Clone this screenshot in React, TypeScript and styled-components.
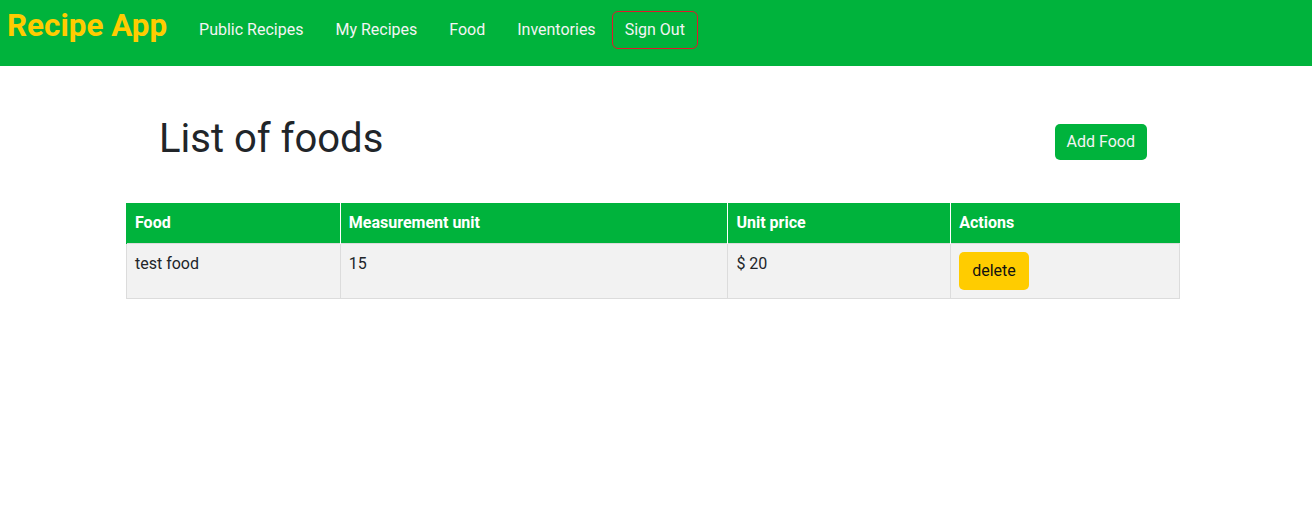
import React from "react";
import styled, { createGlobalStyle } from "styled-components";

const Global = createGlobalStyle`
  html, body { margin: 0; padding: 0; background: #fff; }
  body { font-family: Roboto, "Liberation Sans", sans-serif; color: #212529; font-size: 16px; line-height: 1.5; }
  * { box-sizing: border-box; }
`;

const NavBar = styled.nav`
  height: 66px;
  background: #00b33c;
  display: flex;
  align-items: center;
  padding: 0 7px;
`;

const Brand = styled.a`
  color: #ffcc00;
  font-size: 31.4px;
  font-weight: 700;
  line-height: 1;
  text-decoration: none;
  margin-right: 19px;
  margin-top: -14px;
`;

const NavList = styled.div`
  display: flex;
  align-items: center;
  gap: 6px;
  margin-top: -6px;
`;

const NavLink = styled.a<{ $outlined?: boolean }>`
  color: #f4f4f4;
  text-decoration: none;
  font-size: 16px;
  line-height: 24px;
  padding: 6px 12px;
  border: 1px solid ${(p) => (p.$outlined ? "#e0192b" : "transparent")};
  border-radius: 6px;
  margin-left: ${(p) => (p.$outlined ? "-3px" : "0")};
`;

const Main = styled.main`
  width: 1054px;
  margin: 0 0 0 126px;
`;

const Header = styled.div`
  display: flex;
  justify-content: space-between;
  align-items: flex-start;
  padding: 49px 33px 0 33px;
  height: 137px;
`;

const Title = styled.h1`
  margin: 0;
  font-size: 40px;
  font-weight: 400;
  line-height: 48px;
`;

const Button = styled.button<{ $variant: "green" | "yellow" }>`
  font-family: inherit;
  font-size: 16px;
  line-height: 24px;
  border: none;
  border-radius: 5px;
  padding: ${(p) => (p.$variant === "green" ? "6px 12px" : "7px 13px")};
  background: ${(p) => (p.$variant === "green" ? "#00b33c" : "#ffcc00")};
  color: ${(p) => (p.$variant === "green" ? "#f4f4f4" : "#111")};
  cursor: pointer;
`;

const AddButton = styled(Button)`
  margin-top: 9px;
`;

const Table = styled.table`
  width: 100%;
  border-collapse: collapse;
`;

const Th = styled.th<{ $w: number }>`
  width: ${(p) => p.$w}px;
  background: #00b33c;
  color: #fff;
  font-weight: 700;
  text-align: left;
  padding: 8px 8px;
  height: 40px;
  border-left: 1px solid #fff;
  &:first-child { border-left: 1px solid #00b33c; }
`;

const Td = styled.td`
  background: #f2f2f2;
  padding: 8px 8px 8px 8px;
  vertical-align: top;
  height: 55px;
  border: 1px solid #dcdcdc;
`;

export default function App() {
  return (
    <>
      <Global />
      <NavBar>
        <Brand href="#">Recipe App</Brand>
        <NavList>
          <NavLink href="#">Public Recipes</NavLink>
          <NavLink href="#">My Recipes</NavLink>
          <NavLink href="#">Food</NavLink>
          <NavLink href="#">Inventories</NavLink>
          <NavLink href="#" $outlined>Sign Out</NavLink>
        </NavList>
      </NavBar>
      <Main>
        <Header>
          <Title>List of foods</Title>
          <AddButton $variant="green">Add Food</AddButton>
        </Header>
        <Table>
          <thead>
            <tr>
              <Th $w={214}>Food</Th>
              <Th $w={388}>Measurement unit</Th>
              <Th $w={223}>Unit price</Th>
              <Th $w={229}>Actions</Th>
            </tr>
          </thead>
          <tbody>
            <tr>
              <Td>test food</Td>
              <Td>15</Td>
              <Td>$ 20</Td>
              <Td>
                <Button $variant="yellow">delete</Button>
              </Td>
            </tr>
          </tbody>
        </Table>
      </Main>
    </>
  );
}
